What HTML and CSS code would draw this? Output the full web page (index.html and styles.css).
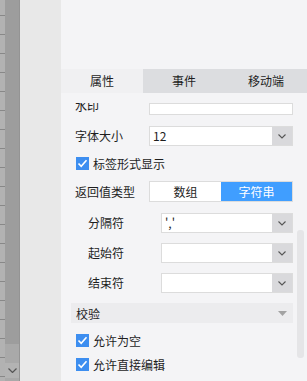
FILE: index.html
```html
<!DOCTYPE html>
<html lang="zh">
<head>
<meta charset="utf-8">
<link rel="stylesheet" href="styles.css">
</head>
<body>
<div class="app">
  <div class="ruler"></div>
  <div class="vscroll">
    <div class="vs-thumb"></div>
    <div class="vs-track"></div>
    <div class="vs-arrow">
      <svg width="9" height="5" viewBox="0 0 9 5"><path d="M0.5 0.5 L4.5 4.5 L8.5 0.5" fill="none" stroke="#555" stroke-width="1.2"/></svg>
    </div>
    <div class="vs-end"></div>
  </div>
  <div class="gutter"></div>
  <div class="panel">
    <div class="panel-top"></div>
    <div class="tabs">
      <div class="tab active">属性</div>
      <div class="tab">事件</div>
      <div class="tab">移动端</div>
    </div>
    <div class="viewport">
      <div class="row row-cut">
        <span class="label">水印</span>
        <div class="input cut"></div>
      </div>
      <div class="row row-first">
        <span class="label">字体大小</span>
        <div class="select">
          <span class="select-text">12</span>
          <span class="select-btn"><svg width="8" height="5" viewBox="0 0 8 5"><path d="M0.5 0.5 L4 4 L7.5 0.5" fill="none" stroke="#555" stroke-width="1.1"/></svg></span>
        </div>
      </div>
      <div class="check-row">
        <span class="check"><svg width="13" height="13" viewBox="0 0 13 13"><rect width="13" height="13" fill="#3d8ef0"/><path d="M2.5 6.5 L5.2 9.3 L10.5 3.3" fill="none" stroke="#fff" stroke-width="1.6"/></svg></span>
        <span>标签形式显示</span>
      </div>
      <div class="row row-seg">
        <span class="label">返回值类型</span>
        <div class="segmented">
          <span class="seg">数组</span>
          <span class="seg seg-on">字符串</span>
        </div>
      </div>
      <div class="row sub row-s1">
        <span class="label">分隔符</span>
        <div class="select">
          <span class="select-text">','</span>
          <span class="select-btn"><svg width="8" height="5" viewBox="0 0 8 5"><path d="M0.5 0.5 L4 4 L7.5 0.5" fill="none" stroke="#555" stroke-width="1.1"/></svg></span>
        </div>
      </div>
      <div class="row sub row-s2">
        <span class="label">起始符</span>
        <div class="select">
          <span class="select-text"></span>
          <span class="select-btn"><svg width="8" height="5" viewBox="0 0 8 5"><path d="M0.5 0.5 L4 4 L7.5 0.5" fill="none" stroke="#555" stroke-width="1.1"/></svg></span>
        </div>
      </div>
      <div class="row sub row-s2">
        <span class="label">结束符</span>
        <div class="select">
          <span class="select-text"></span>
          <span class="select-btn"><svg width="8" height="5" viewBox="0 0 8 5"><path d="M0.5 0.5 L4 4 L7.5 0.5" fill="none" stroke="#555" stroke-width="1.1"/></svg></span>
        </div>
      </div>
      <div class="section">
        <span>校验</span>
        <svg width="9" height="5" viewBox="0 0 9 5"><path d="M0 0 L9 0 L4.5 5 Z" fill="#a3a3a3"/></svg>
      </div>
      <div class="check-row check-a">
        <span class="check"><svg width="13" height="13" viewBox="0 0 13 13"><rect width="13" height="13" fill="#3d8ef0"/><path d="M2.5 6.5 L5.2 9.3 L10.5 3.3" fill="none" stroke="#fff" stroke-width="1.6"/></svg></span>
        <span>允许为空</span>
      </div>
      <div class="check-row">
        <span class="check"><svg width="13" height="13" viewBox="0 0 13 13"><rect width="13" height="13" fill="#3d8ef0"/><path d="M2.5 6.5 L5.2 9.3 L10.5 3.3" fill="none" stroke="#fff" stroke-width="1.6"/></svg></span>
        <span>允许直接编辑</span>
      </div>
    </div>
    <div class="thumb"></div>
  </div>
</div>
</body>
</html>
```

FILE: styles.css
```css
* { box-sizing: border-box; }
html, body { margin: 0; padding: 0; }
body {
  width: 307px;
  height: 381px;
  overflow: hidden;
  font-family: "Noto Sans CJK SC", "Noto Sans", sans-serif;
  font-size: 12px;
  color: #1e1e1e;
}
.app {
  display: flex;
  width: 307px;
  height: 381px;
}
.ruler {
  width: 5px;
  background-color: #b2b2b2;
  background-image: repeating-linear-gradient(to bottom, transparent 0 15px, #888 15px 16px, transparent 16px 19px);
}
.vscroll {
  width: 15px;
  display: flex;
  flex-direction: column;
  background: #a9a9a9;
  border-right: 1px solid #949494;
}
.vs-thumb { height: 344px; background: #9d9d9d; }
.vs-track { flex: 1; }
.vs-arrow {
  height: 15px;
  display: flex;
  align-items: center;
  justify-content: center;
  background: #b3b3b3;
}
.vs-end { height: 3px; }
.gutter {
  width: 41px;
  background: #e8e8e8;
}
.panel {
  position: relative;
  flex: 1;
  display: flex;
  flex-direction: column;
  background: #f4f4f6;
  min-width: 0;
}
.panel-top { height: 69px; }
.tabs {
  display: flex;
  height: 24px;
  background: #dcdde0;
}
.tab {
  flex: 1;
  display: flex;
  align-items: center;
  justify-content: center;
  font-size: 12px;
  line-height: 24px;
}
.tab.active { background: #f0f0f2; }
.viewport {
  margin-top: 10px;
  flex: 1;
  overflow: hidden;
  padding-left: 14px;
  padding-right: 14px;
}
.row {
  display: flex;
  align-items: center;
}
.label {
  width: 74px;
  flex: none;
  line-height: 20px;
  white-space: nowrap;
}
.row-cut {
  height: 12px;
  overflow: hidden;
  align-items: flex-end;
  margin-bottom: 11px;
}
.row-cut .label { line-height: 16px; margin-bottom: 1px; }
.input {
  width: 144px;
  height: 12px;
  background: #fff;
  border: 1px solid #dcdcdc;
}
.select {
  width: 144px;
  height: 20px;
  display: flex;
  background: #fff;
  border: 1px solid #dcdcdc;
}
.select-text {
  flex: 1;
  padding-left: 3px;
  line-height: 18px;
}
.select-btn {
  width: 20px;
  background: #d9d9dc;
  display: flex;
  align-items: center;
  justify-content: center;
}
.row-first { height: 20px; margin-bottom: 5px; }
.check-row {
  display: flex;
  align-items: center;
  height: 24px;
  padding-left: 1px;
  gap: 4px;
  white-space: nowrap;
}
.check { display: flex; width: 13px; height: 13px; }
.row-seg { margin-top: 6px; height: 21px; }
.segmented {
  width: 144px;
  height: 21px;
  display: flex;
  border: 1px solid #dcdcdc;
  background: #fff;
}
.seg {
  flex: 1;
  display: flex;
  align-items: center;
  justify-content: center;
  line-height: 19px;
}
.seg-on { background: #409eff; color: #fff; }
.sub { padding-left: 13px; }
.sub .label { width: 73px; }
.sub .select { width: 132px; }
.row-s1 { margin-top: 11px; }
.row-s2 { margin-top: 10px; }
.section {
  margin-top: 10px;
  margin-left: -4px;
  height: 20px;
  display: flex;
  align-items: center;
  justify-content: space-between;
  padding-left: 5px;
  padding-right: 6px;
  background: #ececee;
}
.check-a { margin-top: 6px; height: 23px; }
.thumb {
  position: absolute;
  left: 236px;
  top: 230px;
  width: 7px;
  height: 128px;
  border-radius: 3px;
  background: #e5e5e7;
}
```
